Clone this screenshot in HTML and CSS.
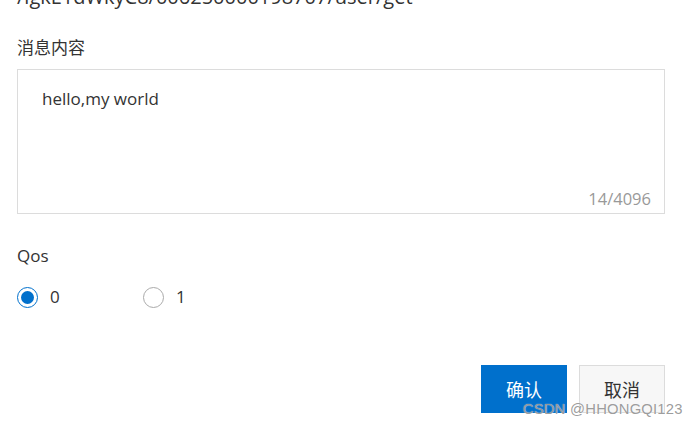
FILE: index.html
```html
<!DOCTYPE html>
<html lang="zh">
<head>
<meta charset="utf-8">
<link rel="stylesheet" href="styles.css">
</head>
<body>
<div class="page">
  <div class="topic">/lgkE1dWkyC8/006250000198707/user/get</div>
  <div class="field">
    <div class="label">消息内容</div>
    <div class="textarea">
      <div class="text">hello,my world</div>
      <div class="count">14/4096</div>
    </div>
  </div>
  <div class="field qos">
    <div class="label">Qos</div>
    <div class="radios">
      <label class="radio"><span class="dot checked"></span><span class="rtext">0</span></label>
      <label class="radio"><span class="dot"></span><span class="rtext">1</span></label>
    </div>
  </div>
  <div class="actions">
    <button class="btn primary">确认</button>
    <button class="btn">取消</button>
  </div>
</div>
<div class="watermark">CSDN @HHONGQI123</div>
</body>
</html>
```
FILE: styles.css
```css
html, body {
  margin: 0;
  padding: 0;
  background: #fff;
  overflow: hidden;
}
body {
  width: 697px;
  height: 427px;
  position: relative;
  font-family: "Open Sans", "Noto Sans CJK SC", sans-serif;
  color: #333;
}
.page {
  padding-left: 17px;
  width: 648px;
}
.topic {
  font-size: 20px;
  line-height: 24px;
  height: 24px;
  margin-top: -15px;
  color: #333;
  white-space: nowrap;
}
.field {
  margin-top: 27px;
}
.label {
  font-size: 17px;
  line-height: 24px;
  color: #333;
}
.textarea {
  margin-top: 9px;
  border: 1px solid #dcdcdc;
  display: flex;
  flex-direction: column;
  justify-content: space-between;
  padding: 18px 13px 3px 24px;
  box-sizing: border-box;
  height: 145px;
}
.text {
  font-size: 17px;
  line-height: 22px;
  color: #333;
}
.count {
  align-self: flex-end;
  font-size: 16.5px;
  line-height: 22px;
  color: #999;
}
.qos {
  margin-top: 30px;
}
.radios {
  display: flex;
  margin-top: 18px;
}
.radio {
  display: flex;
  align-items: center;
  width: 126px;
  font-size: 17px;
  line-height: 22px;
  color: #333;
}
.dot {
  width: 21px;
  height: 21px;
  box-sizing: border-box;
  border: 1px solid #aaa;
  border-radius: 50%;
  margin-right: 12px;
  display: flex;
  align-items: center;
  justify-content: center;
}
.dot.checked {
  border-color: #0070cc;
}
.dot.checked::after {
  content: "";
  width: 13px;
  height: 13px;
  border-radius: 50%;
  background: #0070cc;
}
.actions {
  display: flex;
  justify-content: flex-end;
  gap: 12px;
  margin-top: 57px;
}
.btn {
  width: 86px;
  height: 48px;
  box-sizing: border-box;
  border: 1px solid #dcdcdc;
  background: #f7f7f7;
  font-family: "Noto Sans CJK SC", sans-serif;
  font-size: 18px;
  color: #333;
  padding: 0;
  margin: 0;
}
.btn.primary {
  background: #0070cc;
  border-color: #0070cc;
  color: #fff;
}
.watermark {
  position: absolute;
  left: 523px;
  top: 400px;
  font-family: "Liberation Sans", sans-serif;
  font-size: 14.8px;
  line-height: 18px;
  color: rgba(130, 130, 130, 0.8);
  letter-spacing: 0.2px;
  text-shadow: 0 0 1px #fff;
}
```
